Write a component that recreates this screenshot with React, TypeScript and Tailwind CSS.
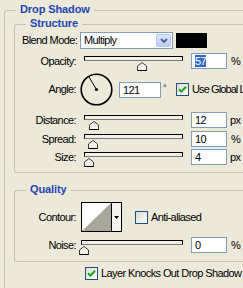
import React from 'react';

const LINE = 'border-[#c3c0b0]';

// group box title sits over the top border line
function Title({ children }: { children: React.ReactNode }) {
  return (
    <div className="absolute -top-[8px] left-[11px] px-[4px] h-[13px] leading-[13px] bg-[#ece9d8] font-bold tracking-[-0.1px] text-[#1b46b4] whitespace-nowrap">
      {children}
    </div>
  );
}

function Label({ children }: { children: React.ReactNode }) {
  return <span className="w-[54px] shrink-0 text-right whitespace-nowrap">{children}</span>;
}

function Thumb() {
  return (
    <svg width="10" height="9" viewBox="0 0 10 9" className="block">
      <path d="M0.5 8.5 V4 L5 0.5 L9.5 4 V8.5 Z" fill="#f3f2ec" stroke="#3a3a3a" />
      <path d="M0.5 8.5 H9.5" stroke="#000" />
    </svg>
  );
}

function Slider({ pos, width = 99, lead = 0 }: { pos: number; width?: number; lead?: number }) {
  return (
    <div className="relative h-[16px] shrink-0" style={{ width: width + lead }}>
      <div
        className="mt-[5px] h-[5px] border border-black border-b-[#7a7a7a] bg-[#f1efe6]"
        style={{ marginLeft: lead }}
      />
      <div className="absolute top-[6px]" style={{ left: pos }}>
        <Thumb />
      </div>
    </div>
  );
}

function Field({ children, w = 36 }: { children: React.ReactNode; w?: number }) {
  return (
    <div
      className="h-[16px] shrink-0 border border-[#7f9db9] bg-white pl-[3px] leading-[14px]"
      style={{ width: w }}
    >
      {children}
    </div>
  );
}

function Check({ on }: { on?: boolean }) {
  return (
    <div className="w-[13px] h-[13px] shrink-0 border border-[#1c5180] bg-gradient-to-br from-[#dcdbd5] to-white flex items-center justify-center">
      {on && (
        <svg width="9" height="9" viewBox="0 0 9 9">
          <path d="M1 4.2 L3.4 6.6 L8 1.8" fill="none" stroke="#21a121" strokeWidth="2" />
        </svg>
      )}
    </div>
  );
}

function Dial() {
  return (
    <svg width="33" height="33" viewBox="0 0 33 33" className="shrink-0">
      <circle cx="16.5" cy="16.5" r="15.3" fill="none" stroke="#000" strokeWidth="1.6" />
      <line x1="16.5" y1="16.5" x2="8.6" y2="3.4" stroke="#000" strokeWidth="1" />
      <circle cx="16.5" cy="16.5" r="1.6" fill="#000" />
    </svg>
  );
}

export default function App() {
  return (
    <div className="w-[243px] h-[288px] overflow-hidden bg-[#ece9d8] pt-[10px] text-black text-[11px] tracking-[-0.6px] font-['Tahoma','Liberation_Sans',sans-serif]">
      <div className={`relative ml-[4px] w-[280px] h-[300px] border-l border-t rounded-tl-[3px] ${LINE} pl-[9px]`}>
        <Title>Drop Shadow</Title>

        {/* Structure */}
        <div className={`relative mt-[13px] border-l border-t border-b rounded-tl-[3px] rounded-bl-[3px] ${LINE} pl-[7px] pb-[7px]`}>
          <Title>Structure</Title>

          <div className="mt-[7px] flex items-center h-[17px]">
            <Label>Blend Mode:</Label>
            <div className="ml-[4px] w-[93px] h-[17px] border border-[#7f9db9] bg-white flex items-center">
              <span className="pl-[3px] flex-1">Multiply</span>
              <div className="w-[15px] h-[13px] mr-[1px] rounded-[2px] bg-gradient-to-b from-[#dfe8fd] to-[#b9cdf8] border border-[#b5c8f5] flex items-center justify-center">
                <svg width="8" height="6" viewBox="0 0 8 6">
                  <path d="M1 1 L4 4 L7 1" fill="none" stroke="#4d6185" strokeWidth="1.8" />
                </svg>
              </div>
            </div>
            <div className="ml-[3px] w-[31px] h-[15px] bg-black" />
          </div>

          <div className="mt-[4px] flex items-center h-[16px]">
            <Label>Opacity:</Label>
            <div className="ml-[8px]"><Slider pos={53} /></div>
            <div className="ml-[8px]">
              <Field><span className="bg-[#316ac5] text-white">57</span></Field>
            </div>
            <span className="ml-[4px]">%</span>
          </div>

          <div className="mt-[4px] flex items-center h-[33px] whitespace-nowrap">
            <Label>Angle:</Label>
            <div className="ml-[4px]"><Dial /></div>
            <div className="ml-[6px]"><Field w={42}>121</Field></div>
            <span className="ml-[2px] self-start mt-[9px] text-[9px]">°</span>
            <div className="ml-[10px]"><Check on /></div>
            <span className="ml-[3px] tracking-[-0.9px]">Use Global Light</span>
          </div>

          <div className="mt-[6px] flex items-center h-[16px]">
            <Label>Distance:</Label>
            <div className="ml-[8px]"><Slider pos={5} /></div>
            <div className="ml-[8px]"><Field>12</Field></div>
            <span className="ml-[3px]">px</span>
          </div>

          <div className="mt-[3px] flex items-center h-[16px]">
            <Label>Spread:</Label>
            <div className="ml-[8px]"><Slider pos={4} /></div>
            <div className="ml-[8px]"><Field>10</Field></div>
            <span className="ml-[4px]">%</span>
          </div>

          <div className="mt-[2px] flex items-center h-[16px]">
            <Label>Size:</Label>
            <div className="ml-[8px]"><Slider pos={0} /></div>
            <div className="ml-[8px]"><Field>4</Field></div>
            <span className="ml-[3px]">px</span>
          </div>
        </div>

        {/* Quality */}
        <div className={`relative mt-[17px] border-l border-t border-b rounded-tl-[3px] rounded-bl-[3px] ${LINE} pl-[7px] pb-[8px]`}>
          <Title>Quality</Title>

          <div className="mt-[11px] flex items-center h-[30px]">
            <Label>Contour:</Label>
            <div className="ml-[5px] w-[41px] h-[30px] border border-black flex">
              <svg width="29" height="28" viewBox="0 0 29 28" className="block bg-white">
                <path d="M0 28 L29 0 V28 Z" fill="#a9a699" />
              </svg>
              <div className="flex-1 border-l border-black bg-[#f4f3ee] flex items-center justify-center">
                <svg width="5" height="3" viewBox="0 0 5 3">
                  <path d="M0 0 H5 L2.5 3 Z" fill="#000" />
                </svg>
              </div>
            </div>
            <div className="ml-[13px]"><Check /></div>
            <span className="ml-[3px] whitespace-nowrap">Anti-aliased</span>
          </div>

          <div className="mt-[5px] flex items-center h-[16px]">
            <Label>Noise:</Label>
            <div className="ml-[3px]"><Slider pos={0} width={102} lead={2} /></div>
            <div className="ml-[8px]"><Field>0</Field></div>
            <span className="ml-[4px]">%</span>
          </div>
        </div>

        <div className="mt-[5px] ml-[71px] flex items-center h-[13px] whitespace-nowrap">
          <Check on />
          <span className="ml-[3px]">Layer Knocks Out Drop Shadow</span>
        </div>
      </div>
    </div>
  );
}
